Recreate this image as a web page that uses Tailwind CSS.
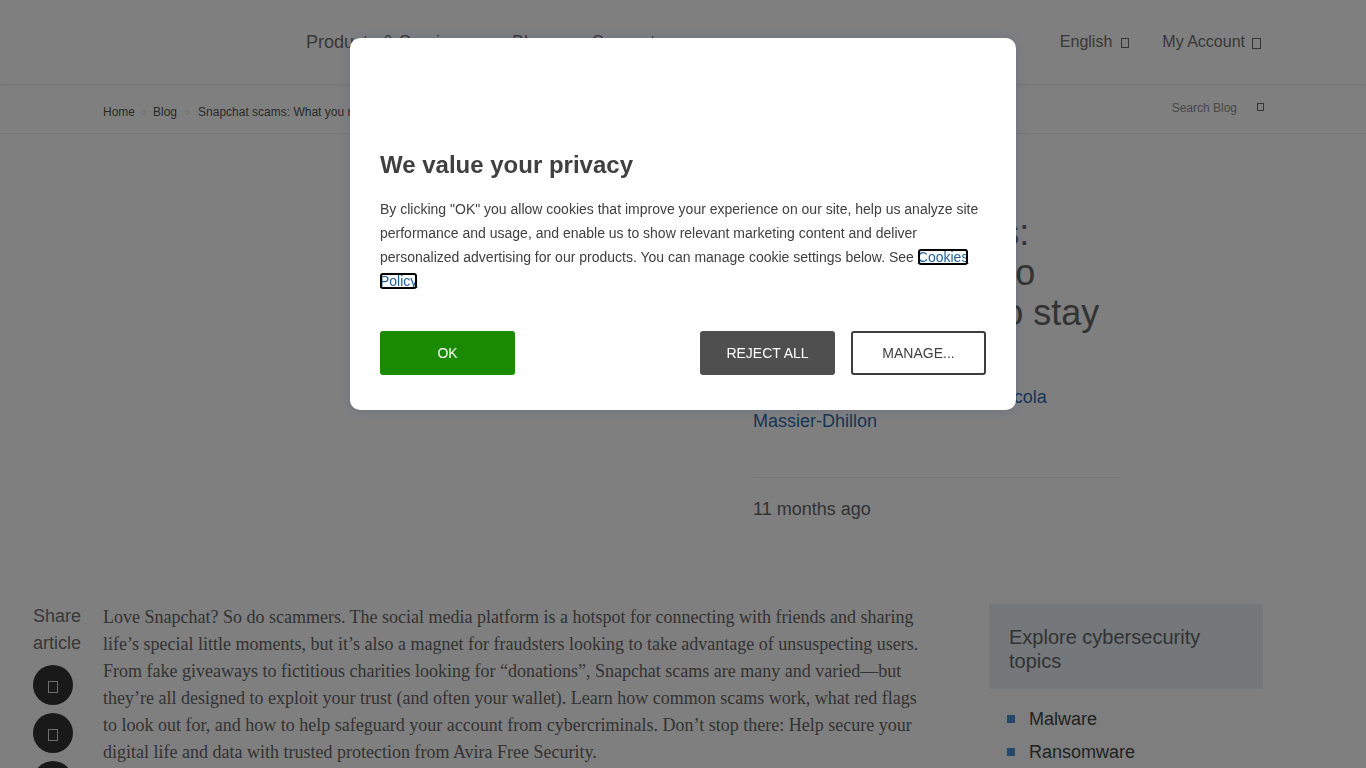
<!DOCTYPE html>
<html lang="en">
<head>
    <meta charset="UTF-8">
    <meta name="viewport" content="width=device-width, initial-scale=1.0">
    <title>Snapchat scams</title>
    <script src="https://cdn.jsdelivr.net/npm/@tailwindcss/browser@4"></script>
</head>
<body class="h-screen overflow-hidden bg-white font-['Liberation_Sans',Arial,sans-serif] text-[#666]">

    <!-- Header -->
    <header class="h-[85px] border-b border-[#eee] shadow-[0_1px_3px_rgba(0,0,0,0.06)] flex items-center pl-[306px] pr-[105px]">
        <nav class="flex gap-[44px] text-[18px] text-[#707070]">
            <a>Products &amp; Services</a>
            <a>Blog</a>
            <a>Support</a>
        </nav>
        <div class="ml-auto flex gap-[33px] text-[16px] text-[#707070] -mt-[1px]">
            <a class="flex items-center gap-[9px]">English <span class="w-[8px] h-[10px] border border-[#6a6a6a] mt-[2px]"></span></a>
            <a class="flex items-center gap-[7px]">My Account <span class="w-[9px] h-[11px] border border-[#6a6a6a] mt-[4px]"></span></a>
        </div>
    </header>

    <!-- Breadcrumb bar -->
    <div class="h-[49px] border-b border-[#eee] flex items-center pl-[103px] pr-[102px] text-[12px] pt-[5px]">
        <div class="flex items-center text-[#555]">
            <a>Home</a>
            <span class="w-[18px] text-center text-[#ddd]">›</span>
            <a>Blog</a>
            <span class="w-[21px] text-center text-[#ddd]">›</span>
            <a>Snapchat scams: What you need to know and how to stay safe</a>
        </div>
        <div class="ml-auto flex items-center gap-[20px] text-[#909090] -mt-[8px]">
            <span>Search Blog</span>
            <span class="w-[7px] h-[8px] border border-[#6a6a6a] -mt-[1px]"></span>
        </div>
    </div>

    <!-- Hero -->
    <section class="h-[469px] pl-[753px] pt-[79px]">
        <div class="w-[368px]">
            <h1 class="text-[36px] leading-[40px] text-[#666]">Snapchat scams: What you need to know and how to stay safe</h1>
            <p class="mt-[12px] text-[18px] leading-[24px] text-[#2f6cad]">From Avira Editorial Crew and Nicola <span class="whitespace-nowrap">Massier-Dhillon</span></p>
            <div class="mt-[44px] border-t border-[#eee] pt-[19px] text-[18px] leading-[24px] text-[#666]">11 months ago</div>
        </div>
    </section>

    <!-- Article -->
    <main class="flex items-start pl-[33px]">
        <aside class="w-[70px] shrink-0 text-[18px] leading-[27px] text-[#707070]">
            <p>Share<br>article</p>
            <div class="mt-[8px] flex flex-col gap-[8px]">
                <span class="w-[40px] h-[40px] rounded-full bg-[#333] flex items-center justify-center"><span class="w-[10px] h-[12px] border border-[#ddd] mt-[4px]"></span></span>
                <span class="w-[40px] h-[40px] rounded-full bg-[#333] flex items-center justify-center"><span class="w-[10px] h-[12px] border border-[#ddd] mt-[4px]"></span></span>
                <span class="w-[40px] h-[40px] rounded-full bg-[#333] flex items-center justify-center"><span class="w-[10px] h-[12px] border border-[#ddd] mt-[4px]"></span></span>
            </div>
        </aside>
        <article class="w-[820px] shrink-0 pt-[1px] font-['Liberation_Serif',serif] text-[18px] leading-[27px] text-[#666]">
            Love Snapchat? So do scammers. The social media platform is a hotspot for connecting with friends and sharing life’s special little moments, but it’s also a magnet for fraudsters looking to take advantage of unsuspecting users. From fake giveaways to fictitious charities looking for “donations”, Snapchat scams are many and varied—but they’re all designed to exploit your trust (and often your wallet). Learn how common scams work, what red flags to look out for, and how to help safeguard your account from cybercriminals. Don’t stop there: Help secure your digital life and data with trusted protection from Avira Free Security.
        </article>
        <aside class="ml-[66px] mt-[1px] w-[274px] shrink-0">
            <h2 class="bg-[#e8f0f5] px-[20px] pt-[21px] pb-[16px] text-[20px] leading-[24px] text-[#666]">Explore cybersecurity topics</h2>
            <ul class="mx-[3px] w-[264px] bg-[#fdfdfd] pt-[14px] pl-[15px] text-[18px] leading-[33px] text-[#444]">
                <li class="flex items-center gap-[14px]"><span class="w-[8px] h-[8px] bg-[#4a8fd8] -mt-[2px]"></span>Malware</li>
                <li class="flex items-center gap-[14px]"><span class="w-[8px] h-[8px] bg-[#4a8fd8] -mt-[2px]"></span>Ransomware</li>
            </ul>
        </aside>
    </main>

    <!-- Cookie overlay -->
    <div class="fixed inset-0 bg-black/50">
        <div class="absolute left-[350px] top-[38px] w-[666px] h-[372px] rounded-[10px] bg-white pt-[113px] px-[30px] text-[#404040] shadow-[0_0_12px_rgba(30,60,140,0.2)]">
            <h2 class="text-[24px] leading-[28px] font-bold">We value your privacy</h2>
            <p class="mt-[18px] text-[14px] leading-[24px]">By clicking "OK" you allow cookies that improve your experience on our site, help us analyze site performance and usage, and enable us to show relevant marketing content and deliver personalized advertising for our products. You can manage cookie settings below. See <a class="underline text-[#1f5f9a] outline-2 -outline-offset-2 outline-black rounded-[3px]">Cookies Policy</a></p>
            <div class="mt-[38px] flex text-[14px]">
                <button class="w-[135px] h-[44px] rounded-[3px] bg-[#1a8a00] text-white">OK</button>
                <button class="ml-auto w-[135px] h-[44px] rounded-[3px] bg-[#4f4f4f] text-white">REJECT ALL</button>
                <button class="ml-[16px] w-[135px] h-[44px] rounded-[3px] border-2 border-[#3d3d3d] bg-white">MANAGE...</button>
            </div>
        </div>
    </div>

</body>
</html>
